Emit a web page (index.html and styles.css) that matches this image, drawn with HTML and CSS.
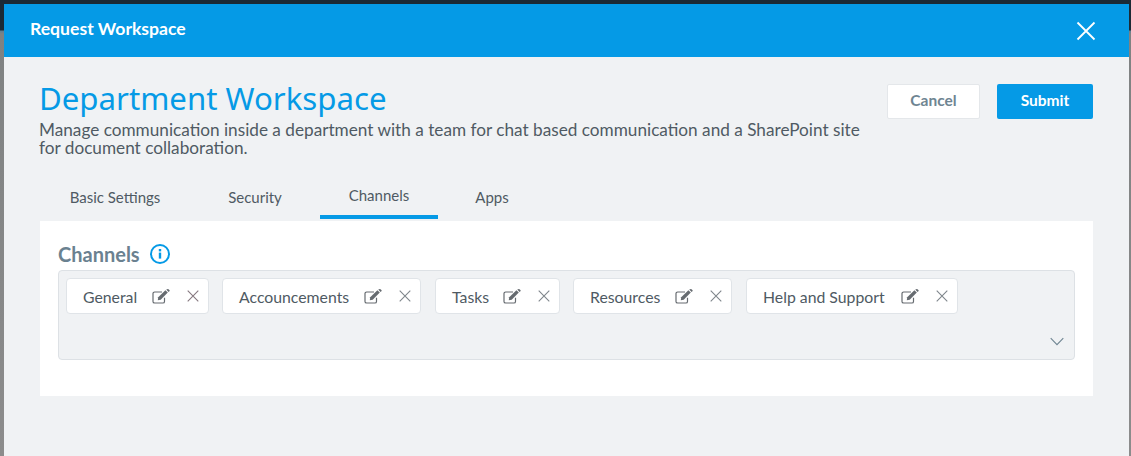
FILE: index.html
```html
<!DOCTYPE html>
<html lang="en">
<head>
    <meta charset="UTF-8">
    <meta name="viewport" content="width=device-width, initial-scale=1.0">
    <title>Request Workspace</title>
    <link rel="stylesheet" href="styles.css">
</head>
<body>
    <div class="modal">
        <div class="modal-header">
            <span class="modal-title">Request Workspace</span>
            <button class="close-button" aria-label="Close">
                <svg width="20" height="20" viewBox="0 0 20 20"><path d="M1.5 1.5L18.5 18.5M18.5 1.5L1.5 18.5" stroke="#fff" stroke-width="1.8" fill="none"/></svg>
            </button>
        </div>

        <div class="modal-body">
            <div class="intro">
                <div class="intro-text">
                    <h1>Department Workspace</h1>
                    <p>Manage communication inside a department with a team for chat based communication and a SharePoint site for document collaboration.</p>
                </div>
                <div class="actions">
                    <button class="btn btn-cancel"><span>Cancel</span></button>
                    <button class="btn btn-submit"><span>Submit</span></button>
                </div>
            </div>

            <!-- Tabs -->
            <div class="tabs">
                <div class="tab tab-basic">Basic Settings</div>
                <div class="tab tab-security">Security</div>
                <div class="tab tab-channels active">Channels</div>
                <div class="tab tab-apps">Apps</div>
            </div>

            <div class="panel">
                <div class="field-label">
                    <span>Channels</span>
                    <svg width="20" height="20" viewBox="0 0 20 20"><circle cx="10" cy="10" r="9" stroke="#059ae6" stroke-width="2" fill="none"/><rect x="8.8" y="8.6" width="2.4" height="6" fill="#059ae6"/><rect x="8.8" y="5" width="2.4" height="2.4" fill="#059ae6"/></svg>
                </div>
                <div class="select-box">
                    <div class="chips">
                        <div class="chip chip-general">
                            <span class="chip-name">General</span>
                            <svg class="edit-icon" width="18" height="15" viewBox="0 0 18 15"><path d="M12.5 8.8V12.4a1.6 1.6 0 0 1-1.6 1.6H2.6A1.6 1.6 0 0 1 1 12.4V4.6A1.6 1.6 0 0 1 2.6 3H10" stroke="#666b70" stroke-width="1.2" fill="none"/><path d="M6.2 8.3L13.4 1.2 15.8 3.6 8.7 10.8 5.8 11.2z" fill="#666b70"/><path d="M14.2.6L16.6 3 17.4 2.2a.8.8 0 0 0 0-1.1L16.4.2a.8.8 0 0 0-1.1 0z" fill="#666b70"/></svg>
                            <svg class="remove-icon" width="12" height="12" viewBox="0 0 12 12"><path d="M.7.7L11.3 11.3M11.3.7L.7 11.3" stroke="#86787f" stroke-width="1.1" fill="none"/></svg>
                        </div>
                        <div class="chip chip-announce">
                            <span class="chip-name">Accouncements</span>
                            <svg class="edit-icon" width="18" height="15" viewBox="0 0 18 15"><path d="M12.5 8.8V12.4a1.6 1.6 0 0 1-1.6 1.6H2.6A1.6 1.6 0 0 1 1 12.4V4.6A1.6 1.6 0 0 1 2.6 3H10" stroke="#666b70" stroke-width="1.2" fill="none"/><path d="M6.2 8.3L13.4 1.2 15.8 3.6 8.7 10.8 5.8 11.2z" fill="#666b70"/><path d="M14.2.6L16.6 3 17.4 2.2a.8.8 0 0 0 0-1.1L16.4.2a.8.8 0 0 0-1.1 0z" fill="#666b70"/></svg>
                            <svg class="remove-icon" width="12" height="12" viewBox="0 0 12 12"><path d="M.7.7L11.3 11.3M11.3.7L.7 11.3" stroke="#7f868c" stroke-width="1.1" fill="none"/></svg>
                        </div>
                        <div class="chip chip-tasks">
                            <span class="chip-name">Tasks</span>
                            <svg class="edit-icon" width="18" height="15" viewBox="0 0 18 15"><path d="M12.5 8.8V12.4a1.6 1.6 0 0 1-1.6 1.6H2.6A1.6 1.6 0 0 1 1 12.4V4.6A1.6 1.6 0 0 1 2.6 3H10" stroke="#666b70" stroke-width="1.2" fill="none"/><path d="M6.2 8.3L13.4 1.2 15.8 3.6 8.7 10.8 5.8 11.2z" fill="#666b70"/><path d="M14.2.6L16.6 3 17.4 2.2a.8.8 0 0 0 0-1.1L16.4.2a.8.8 0 0 0-1.1 0z" fill="#666b70"/></svg>
                            <svg class="remove-icon" width="12" height="12" viewBox="0 0 12 12"><path d="M.7.7L11.3 11.3M11.3.7L.7 11.3" stroke="#7f868c" stroke-width="1.1" fill="none"/></svg>
                        </div>
                        <div class="chip chip-resources">
                            <span class="chip-name">Resources</span>
                            <svg class="edit-icon" width="18" height="15" viewBox="0 0 18 15"><path d="M12.5 8.8V12.4a1.6 1.6 0 0 1-1.6 1.6H2.6A1.6 1.6 0 0 1 1 12.4V4.6A1.6 1.6 0 0 1 2.6 3H10" stroke="#666b70" stroke-width="1.2" fill="none"/><path d="M6.2 8.3L13.4 1.2 15.8 3.6 8.7 10.8 5.8 11.2z" fill="#666b70"/><path d="M14.2.6L16.6 3 17.4 2.2a.8.8 0 0 0 0-1.1L16.4.2a.8.8 0 0 0-1.1 0z" fill="#666b70"/></svg>
                            <svg class="remove-icon" width="12" height="12" viewBox="0 0 12 12"><path d="M.7.7L11.3 11.3M11.3.7L.7 11.3" stroke="#7f868c" stroke-width="1.1" fill="none"/></svg>
                        </div>
                        <div class="chip chip-help">
                            <span class="chip-name">Help and Support</span>
                            <svg class="edit-icon" width="18" height="15" viewBox="0 0 18 15"><path d="M12.5 8.8V12.4a1.6 1.6 0 0 1-1.6 1.6H2.6A1.6 1.6 0 0 1 1 12.4V4.6A1.6 1.6 0 0 1 2.6 3H10" stroke="#666b70" stroke-width="1.2" fill="none"/><path d="M6.2 8.3L13.4 1.2 15.8 3.6 8.7 10.8 5.8 11.2z" fill="#666b70"/><path d="M14.2.6L16.6 3 17.4 2.2a.8.8 0 0 0 0-1.1L16.4.2a.8.8 0 0 0-1.1 0z" fill="#666b70"/></svg>
                            <svg class="remove-icon" width="12" height="12" viewBox="0 0 12 12"><path d="M.7.7L11.3 11.3M11.3.7L.7 11.3" stroke="#7f868c" stroke-width="1.1" fill="none"/></svg>
                        </div>
                    </div>
                    <svg class="chevron" width="14" height="9" viewBox="0 0 14 9"><path d="M.7 1.2L7 7.6 13.3 1.2" stroke="#6f8592" stroke-width="1.1" fill="none"/></svg>
                </div>
            </div>
        </div>
    </div>
</body>
</html>
```
FILE: styles.css
```css
html, body {
    height: 100%;
}
body {
    font-family: Lato, "Noto Sans", sans-serif;
    margin: 0;
    overflow: hidden;
    padding: 4px 2px 0 4px;
    box-sizing: border-box;
    background: linear-gradient(#1b2a35 0, #1b2a35 30px, #5f7f94 31px, #7f8282 34px, #8c8c8c 456px);
    color: #4f5a63;
}
body::before {
    content: "";
    position: absolute;
    top: 0;
    left: 0;
    right: 0;
    height: 4px;
    background: #1b2a35;
}
.modal {
    position: relative;
    height: 452px;
    background: #f0f2f4;
}
.modal-header {
    height: 53px;
    box-sizing: border-box;
    background: #059ae6;
    display: flex;
    align-items: center;
    justify-content: space-between;
    padding: 0 33px 0 26px;
}
.modal-title {
    color: white;
    font-weight: 700;
    font-size: 17.6px;
    padding-bottom: 4px;
}
.close-button {
    background: none;
    border: none;
    padding: 0;
    display: flex;
}
.modal-body {
    padding: 26px 36px 0;
}
.intro {
    display: flex;
    justify-content: space-between;
    height: 90px;
}
.intro-text {
    width: 840px;
}
h1 {
    font-family: "Noto Sans", sans-serif;
    font-weight: 400;
    font-size: 31.2px;
    line-height: 30px;
    margin: 0 0 8px -1px;
    color: #059ae6;
}
p {
    margin: 0 0 0 -1px;
    font-size: 17.2px;
    line-height: 18px;
}
.actions {
    display: flex;
    gap: 17px;
    align-items: flex-start;
    padding-top: 1px;
}
.btn {
    height: 35px;
    font-family: inherit;
    font-weight: 700;
    font-size: 15.5px;
    border-radius: 2px;
    padding: 0 0 4px;
}
.btn-cancel {
    width: 93px;
    background: white;
    border: 1px solid #e4e7ea;
    color: #6f8592;
}
.btn-submit {
    width: 96px;
    background: #059ae6;
    border: none;
    color: white;
}
.tabs {
    display: flex;
    height: 46px;
    margin-bottom: 2px;
    font-size: 15px;
}
.tab {
    line-height: 44px;
    box-sizing: border-box;
    text-align: center;
    padding-top: 2px;
}
.tab-basic { width: 150px; }
.tab-security { width: 130px; }
.tab-channels { width: 118px; padding-top: 0; }
.tab-apps { width: 108px; }
.tab.active {
    border-bottom: 4px solid #059ae6;
}
.panel {
    background: white;
    height: 175px;
    box-sizing: border-box;
    padding: 20px 18px 0;
}
.field-label {
    display: flex;
    align-items: center;
    gap: 10px;
    height: 29px;
    box-sizing: border-box;
    padding-bottom: 3px;
    font-size: 20px;
    font-weight: 700;
    color: #6a8190;
}
.select-box {
    position: relative;
    height: 90px;
    box-sizing: border-box;
    background: #f0f2f4;
    border: 1px solid #dde1e5;
    border-radius: 4px;
    padding: 7px;
}
.chips {
    display: flex;
}
.chip {
    display: flex;
    align-items: center;
    height: 36px;
    box-sizing: border-box;
    background: white;
    border: 1px solid #e0e4e8;
    border-radius: 4px;
    padding-left: 16px;
    font-size: 15.8px;
}
.chip-general { width: 143px; margin-right: 13px; }
.chip-announce { width: 199px; margin-right: 14px; }
.chip-tasks { width: 125px; margin-right: 13px; }
.chip-resources { width: 159px; margin-right: 14px; }
.chip-help { width: 212px; }
.chip-name {
    flex: 1;
    padding-top: 1px;
}
.edit-icon {
    margin-right: 17px;
}
.remove-icon {
    margin-right: 9px;
}
.chevron {
    position: absolute;
    right: 10px;
    bottom: 13px;
}
```
